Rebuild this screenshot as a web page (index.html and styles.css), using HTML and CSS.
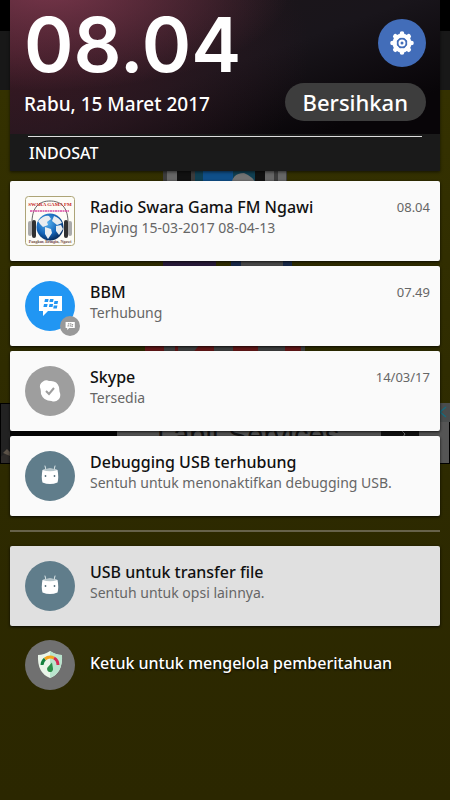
FILE: index.html
```html
<!DOCTYPE html>
<html lang="id">
<head>
<meta charset="utf-8">
<meta name="viewport" content="width=device-width, initial-scale=1">
<title>Pemberitahuan</title>
<link rel="stylesheet" href="styles.css">
</head>
<body>
<svg width="0" height="0" class="defs" aria-hidden="true">
  <defs>
    <radialGradient id="sea" cx=".4" cy=".35" r=".7"><stop offset="0" stop-color="#58b2ef"/><stop offset=".6" stop-color="#1464b8"/><stop offset="1" stop-color="#06234f"/></radialGradient>
    <g id="robot">
      <path d="M20 15l1 4M30 15l-1 4" stroke="#dfe8ea" stroke-width="1" stroke-linecap="round"/>
      <path d="M17.500 19q7.500-3 15 0q1.500 7 0 12.500q-7.500 3-15 0q-1.500-5.500 0-12.500z" fill="#fff"/>
      <path d="M17.500 19q7.500-3 15 0q-7.500 2.500-15 0z" fill="#b5c5ca"/>
      <circle cx="20.500" cy="25" r=".9" fill="#546e7a"/><circle cx="29.500" cy="25" r=".9" fill="#546e7a"/>
    </g>
    <g id="chat">
      <path d="M14 15h23v15H23l-5 5v-5h-4z" fill="#fff"/>
      <path d="M20 18h3.600l-.6 3h-3.600zM25 18h3.600l-.6 3h-3.600zM19 23h3.600l-.6 3H18.400zM24.500 23h3.600l-.6 3h-3.600zM29.500 20h3.600l-.6 3h-3.600zM28.800 24.500h3.600l-.6 3h-3.600z" fill="currentColor"/>
    </g>
  </defs>
</svg>
<div class="screen">
  <div class="backdrop" aria-hidden="true">
    <div class="back-status"></div>
    <div class="back-toolbar"></div>
    <div class="back-page">
      <svg class="back-logo" viewBox="0 0 160 270">
        <path d="M18 0h124v98H18z" fill="#3c3c3c"/>
        <path d="M22 76h14v20H22zM120 76h9v20h-9zM133 76h8v20h-8z" fill="#666"/>
        <path d="M32 76h14v20H32zM110 76h10v20h-10z" fill="#111"/>
        <path d="M50 76h60v22H50z" fill="#103f52"/>
        <path d="M58 81l30-5v22H50l8-7z" fill="#0f4f89"/>
        <path d="M86 98q0-15 13-15q12 5 13 15z" fill="#737373"/>
        <path d="M18 165h53v16H18z" fill="#2a1b3c"/>
        <path d="M86 165h61v16H86z" fill="#182a4c"/>
        <path d="M96 165h42v16H96z" fill="#4b4b4b"/>
        <path d="M0 254h160v10H0z" fill="#3f3f3f"/>
        <path d="M0 254h19v10H0zM30 254h3v10h-3zM47 264l8-10h14v10zM88 254h25v10H88zM140 254h16v10h-16z" fill="#651818"/>
      </svg>
    </div>
    <div class="back-ad">
      <svg class="ad-photo" viewBox="0 0 117 61" preserveAspectRatio="none">
        <path d="M0 0h117v61H0z" fill="#222"/><path d="M0 54l6-4 4 4v7H0z" fill="#2e2b29"/><path d="M3 50l4-4 3 3v4z" fill="#5c5348"/><path d="M10 28h107v6H10z" fill="#050505"/><path d="M0 0h117v1H0zM0 60h117v1H0zM0 0h1v61H0z" fill="#000"/>
      </svg>
      <span class="ad-title">Lapit Services</span>
      <svg class="ad-end" viewBox="0 0 70 61">
        <path d="M1 28h38v5H1z" fill="#111"/><path d="M22 28l3 3-2 3" stroke="#777" fill="none"/>
        <path d="M57 0h13v19H57z" fill="#4a4d4d"/><path d="M66 4l-6 5 6 5" fill="none" stroke="#176a7c" stroke-width="1.500"/>
        <path d="M69 19h1v42h-1zM57 60h13v1H57z" fill="#000"/>
      </svg>
    </div>
  </div>

  <main class="shade">
    <header class="header">
      <div class="hero">
        <div class="hero-row">
          <time class="clock">08.04</time>
          <button class="settings" type="button" aria-label="Setelan">
            <svg viewBox="0 0 48 48">
              <circle cx="24" cy="24" r="7.500" fill="none" stroke="#fff" stroke-width="4"/>
              <g stroke="#fff" stroke-width="4.600" stroke-linecap="round"><path d="M24 14.500v2M24 31.500v2M14.500 24h2M31.500 24h2M17.300 17.300l1.400 1.400M29.300 29.300l1.400 1.400M17.300 30.700l1.400-1.400M29.300 18.700l1.400-1.400"/></g>
              <circle cx="24" cy="24" r="2.500" fill="none" stroke="#fff" stroke-width="2"/>
            </svg>
          </button>
        </div>
        <div class="date-row">
          <span class="date">Rabu, 15 Maret 2017</span>
          <button class="clear" type="button">Bersihkan</button>
        </div>
      </div>
      <div class="carrier">INDOSAT</div>
    </header>

    <section class="list">
      <article class="card">
        <svg class="icon" viewBox="0 0 50 50">
          <rect x=".5" y=".5" width="49" height="49" rx="3" fill="#fdfcf6" stroke="#ada477"/>
          <path d="M7 30C6 9 16 5 25 5s19 4 18 25" fill="none" stroke="#666" stroke-width="1"/>
          <circle cx="25" cy="31" r="13.500" fill="url(#sea)"/>
          <path d="M13 25q6-6 11-5l2 3-4 3 1 3-5 2-3-3zM29 20q6 2 8 7l-5 2-5-4zM20 31l6 2 1 4-4 6-3-5zM31 30l5-1 2 4-4 6-3-4z" fill="#e9edf0"/>
          <rect x="3" y="25" width="4" height="15" rx="2" fill="#aaa"/><rect x="7" y="24" width="4" height="18" rx="2" fill="#303030"/>
          <rect x="43" y="25" width="4" height="15" rx="2" fill="#aaa"/><rect x="39" y="24" width="4" height="18" rx="2" fill="#303030"/>
          <text class="logo-name" x="25" y="10" text-anchor="middle">SWARA GAMA FM</text>
          <path d="M5 15h39" stroke="#d64aa2" stroke-width="1.500" stroke-dasharray="2 .5"/>
          <text class="logo-place" x="25" y="47" text-anchor="middle">Pangkur, Bringin, Ngawi</text>
        </svg>
        <div class="body"><div class="title-row"><h2 class="title">Radio Swara Gama FM Ngawi</h2><time class="time">08.04</time></div><p class="text">Playing 15-03-2017 08-04-13</p></div>
      </article>
      <article class="card">
        <div class="icon-stack">
          <svg class="icon bbm" viewBox="0 0 50 50"><circle cx="25" cy="25" r="25" fill="#2196f3"/><use href="#chat"/></svg>
          <svg class="badge" viewBox="0 0 50 50"><circle cx="25" cy="25" r="25" fill="#999"/><use href="#chat"/></svg>
        </div>
        <div class="body"><div class="title-row"><h2 class="title">BBM</h2><time class="time">07.49</time></div><p class="text">Terhubung</p></div>
      </article>
      <article class="card">
        <svg class="icon" viewBox="0 0 50 50"><circle cx="25" cy="25" r="25" fill="#9e9e9e"/><path d="M18 15.500q3-2 6-.5q8-1 10 6l.5 4.500q2 5-1 8t-7 1.500q-8 0-10.500-7q0-3-.5-5q-2-5 2.500-7.500z" fill="#fff"/><path d="M21 25l3 3 5-6" fill="none" stroke="#9e9e9e" stroke-width="2"/></svg>
        <div class="body"><div class="title-row"><h2 class="title">Skype</h2><time class="time">14/03/17</time></div><p class="text">Tersedia</p></div>
      </article>
      <article class="card">
        <svg class="icon" viewBox="0 0 50 50"><circle cx="25" cy="25" r="25" fill="#607d8b"/><use href="#robot"/></svg>
        <div class="body"><div class="title-row"><h2 class="title">Debugging USB terhubung</h2></div><p class="text">Sentuh untuk menonaktifkan debugging USB.</p></div>
      </article>
    </section>
    <hr class="divider">
    <article class="card muted">
      <svg class="icon" viewBox="0 0 50 50"><circle cx="25" cy="25" r="25" fill="#607d8b"/><use href="#robot"/></svg>
      <div class="body"><div class="title-row"><h2 class="title">USB untuk transfer file</h2></div><p class="text">Sentuh untuk opsi lainnya.</p></div>
    </article>
    <button class="manage" type="button">
      <svg class="icon" viewBox="0 0 50 50">
        <circle cx="25" cy="25" r="25" fill="#707070"/>
        <path d="M25 11q6 4 12 4q1 18-12 23q-13-5-12-23q6 0 12-4z" fill="#eaf5e9"/>
        <path d="M25 11q6 4 12 4q1 18-12 23z" fill="#b9e4cd"/>
        <path d="M17 25a8 8 0 0 1 3-6" fill="none" stroke="#14803e" stroke-width="3"/>
        <path d="M20 19a8 8 0 0 1 9-1" fill="none" stroke="#f4a51d" stroke-width="3"/>
        <path d="M29 18a8 8 0 0 1 4 7" fill="none" stroke="#d42b52" stroke-width="3"/>
        <path d="M27 22.500l1 6a3 3 0 1 1-5.500-1z" fill="#2b9149"/>
      </svg>
      <span class="manage-label">Ketuk untuk mengelola pemberitahuan</span>
    </button>
  </main>
</div>
</body>
</html>
```
FILE: styles.css
```css
* { box-sizing: border-box; }
body {
  margin: 0;
  background: #2b2800;
  font-family: "Noto Sans", "Open Sans", sans-serif;
}
.defs { position: absolute; }
button { border: 0; padding: 0; font: inherit; }
h2, p { margin: 0; }

.screen { display: grid; min-height: 100vh; }
.backdrop, .shade { grid-area: 1 / 1; min-width: 0; }
.backdrop { background: linear-gradient(#343100 90px, #2d2a00 480px, #2b2700); }
.back-status { height: 31px; background: #000; }
.back-toolbar { height: 59px; background: #181818; }
.back-page { display: flex; justify-content: center; height: 313px; }
.back-logo { width: 160px; height: 270px; }
.back-ad { display: flex; height: 61px; background: #555; overflow: hidden; }
.ad-photo { width: 117px; height: 61px; }
.ad-title { flex: 1; padding: 14px 0 0 40px; color: #151515; font-family: "Liberation Sans", sans-serif; font-size: 29px; line-height: 36px; white-space: nowrap; }
.ad-end { width: 70px; height: 61px; }

.shade { padding: 0 10px; }
.header { box-shadow: 0 1px 3px rgba(0, 0, 0, .6); }
.hero {
  height: 134px;
  padding: 4px 14px 0;
  color: #fff;
  background:
    radial-gradient(ellipse 240px 100px at 40px -10px, rgba(133, 60, 83, .8), transparent),
    radial-gradient(ellipse 300px 180px at 0 50px, rgba(65, 26, 38, .8), transparent),
    linear-gradient(160deg, #1d1519, #19151b 50%, #080508 85%);
}
.hero-row, .date-row { display: flex; justify-content: space-between; align-items: center; }
.hero-row { height: 78px; }
.clock { padding-top: 4px; font-family: Inter, sans-serif; font-size: 75px; font-weight: 600; line-height: 76px; }
.settings { width: 48px; height: 48px; border-radius: 50%; background: #426db9; }
.settings svg { display: block; width: 48px; height: 48px; }
.date-row { height: 40px; }
.date { padding-top: 4px; font-size: 19px; font-weight: 500; line-height: 24px; }
.clear { height: 38px; padding: 0 18px; border-radius: 19px; background: #3d3d3d; color: #fff; font-size: 22px; font-weight: 500; line-height: 36px; }
.carrier { padding: 7px 19px 6px; background: #1a1a1a; color: #fff; font-size: 16px; font-weight: 500; line-height: 24px; position: relative; }
.carrier::before { content: ""; position: absolute; top: 2px; left: 18px; right: 18px; height: 1px; background: #ddd; }

.list { display: grid; gap: 5px; margin-top: 10px; }
.card {
  display: flex;
  gap: 15px;
  min-height: 80px;
  padding: 15px 10px 15px 15px;
  border-radius: 2px;
  background: #fafafa;
  box-shadow: 0 1px 3px rgba(0, 0, 0, .8);
}
.card.muted { background: #e0e0e0; }
.icon { display: block; flex: none; width: 50px; height: 50px; }
.icon-stack { position: relative; height: 50px; }
.bbm { color: #2196f3; }
.badge { position: absolute; right: -5px; bottom: -5px; width: 20px; height: 20px; color: #999; }
.body { flex: 1; min-width: 0; }
.title-row { display: flex; justify-content: space-between; align-items: center; height: 21px; }
.title { color: #111; font-size: 16px; font-weight: 500; line-height: 20px; white-space: nowrap; }
.text { color: #666; font-size: 14px; line-height: 22px; white-space: nowrap; }
.time { color: #666; font-size: 13px; line-height: 20px; }
.logo-name { fill: #c5251c; font: 700 5px "Liberation Serif", serif; }
.logo-place { fill: #704848; font: 700 4px "Liberation Serif", serif; }
.divider { height: 2px; margin: 14px 0; border: 0; background: #66624a; }
.manage {
  display: flex;
  align-items: center;
  gap: 15px;
  width: 100%;
  margin-top: 14px;
  padding: 0 15px;
  background: none;
  color: #fff;
  font-size: 16px;
  font-weight: 500;
  line-height: 22px;
  text-align: left;
  text-shadow: 0 1px 2px #000;
}
.manage-label { padding-bottom: 4px; }
```
